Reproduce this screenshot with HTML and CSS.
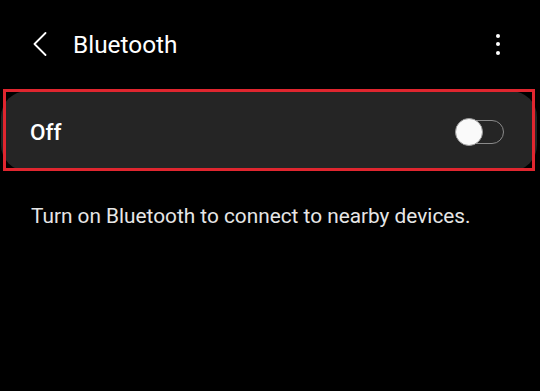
FILE: index.html
```html
<!DOCTYPE html>
<html>
<head>
<meta charset="utf-8">
<link rel="stylesheet" href="styles.css">
</head>
<body>
<div class="screen">
  <header class="appbar">
    <svg class="back" width="14" height="24" viewBox="0 0 14 24"><path d="M12.5 1 L1.5 12 L12.5 23" fill="none" stroke="#fff" stroke-width="1.8" stroke-linecap="round" stroke-linejoin="round"/></svg>
    <h1 class="title">Bluetooth</h1>
    <div class="menu"><span></span><span></span><span></span></div>
  </header>
  <div class="card-wrap">
    <div class="card">
      <span class="label">Off</span>
      <div class="switch"><div class="thumb"></div></div>
    </div>
    <div class="highlight"></div>
  </div>
  <p class="desc">Turn on Bluetooth to connect to nearby devices.</p>
</div>
</body>
</html>
```
FILE: styles.css
```css
html, body {
  margin: 0;
  padding: 0;
  background: #000;
}
.screen {
  width: 540px;
  height: 391px;
  background: #000;
  font-family: Roboto, "Noto Sans", sans-serif;
  color: #fff;
  overflow: hidden;
}
.appbar {
  height: 88px;
  display: flex;
  align-items: center;
  padding-left: 33px;
  padding-right: 40px;
}
.back {
  display: block;
  flex: none;
}
.title {
  margin: 0 0 0 26px;
  font-size: 24.4px;
  font-weight: 400;
  flex: 1;
  letter-spacing: 0;
}
.menu {
  display: flex;
  flex-direction: column;
  gap: 4.5px;
  align-items: center;
}
.menu span {
  display: block;
  width: 4px;
  height: 4px;
  border-radius: 50%;
  background: #fff;
}
.card-wrap {
  position: relative;
  margin: 3px 3px 0 1px;
}
.card {
  height: 80px;
  background: #252525;
  border-radius: 26px;
  display: flex;
  align-items: center;
  justify-content: space-between;
  padding: 0 33px 0 29px;
}
.label {
  font-size: 22.5px;
  font-weight: 500;
  position: relative;
  top: 1px;
}
.switch {
  width: 46px;
  height: 22px;
  border: 1.5px solid #8a8a8a;
  border-radius: 13px;
  position: relative;
  top: 1px;
}
.thumb {
  position: absolute;
  left: -2px;
  top: -3.5px;
  width: 26px;
  height: 26px;
  border-radius: 50%;
  background: #fafafa;
  border: 1px solid #9a9a9a;
}
.highlight {
  position: absolute;
  top: -2px;
  left: 2px;
  right: 2px;
  bottom: 0;
  border: 3px solid #e0262f;
  pointer-events: none;
}
.desc {
  margin: 32px 0 0 31px;
  font-size: 20.8px;
  line-height: 26px;
  color: #e6e6e6;
}
```
